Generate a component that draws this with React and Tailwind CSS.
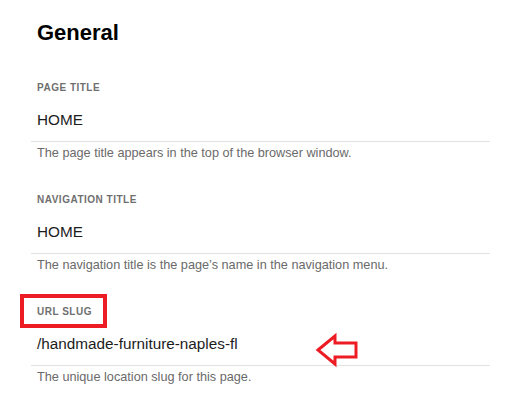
import React from 'react';

const fields = [
    { label: 'PAGE TITLE', value: 'HOME', help: 'The page title appears in the top of the browser window.' },
    { label: 'NAVIGATION TITLE', value: 'HOME', help: "The navigation title is the page’s name in the navigation menu." },
    { label: 'URL SLUG', value: '/handmade-furniture-naples-fl', help: 'The unique location slug for this page.' },
];

const App = () => {
    return (
        <div className="relative min-h-screen w-full bg-white font-['Liberation_Sans',Arial,sans-serif]">
            <div className="ml-[31px] w-[459px] pt-[22px]">
                <h1 className="pl-[6px] text-[22px] leading-[22px] font-bold text-black">General</h1>

                {fields.map(({ label, value, help }, i) => (
                    <div key={label} className={i === 0 ? 'mt-[38px]' : 'mt-[33px]'}>
                        <p className="pl-[6px] text-[10px] leading-[12px] font-bold tracking-[0.05em] text-[#6f6f6f]">{label}</p>
                        <div className="mt-[17px] pb-[12px] pl-[6px] border-b border-[#e2e2e2]">
                            <p className="text-[15.3px] leading-[18px] text-[#1c1c1c]">{value}</p>
                        </div>
                        <p className="mt-[3px] pl-[6px] text-[12.7px] leading-[16px] text-[#6a6a6a]">{help}</p>
                    </div>
                ))}
            </div>

            {/* annotation: box round the slug label */}
            <div className="absolute left-[20px] top-[294px] w-[87px] h-[34px] border-4 border-[#ed1c24]" />

            {/* annotation: arrow pointing at the slug */}
            <svg className="absolute left-[314px] top-[331px]" width="46" height="38" viewBox="314 331 46 38">
                <polygon
                    points="318,350 335,336 335,343 356,343 356,357 335,357 335,364"
                    fill="none"
                    stroke="#ed1c24"
                    strokeWidth="3"
                    strokeLinejoin="miter"
                />
            </svg>
        </div>
    );
};

export default App;
